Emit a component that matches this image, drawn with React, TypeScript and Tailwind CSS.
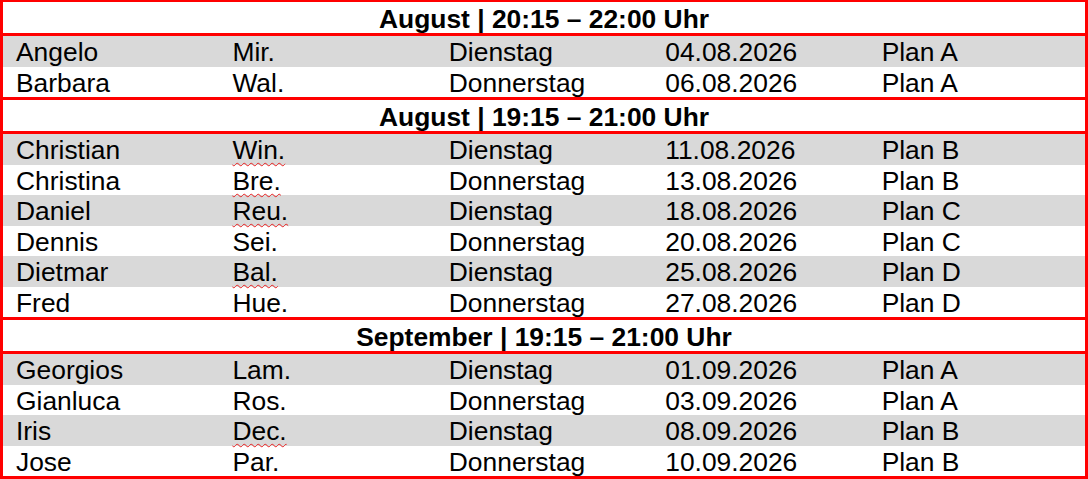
type Row = {
  first: string;
  last: string;
  day: string;
  date: string;
  plan: string;
  flagged?: boolean;
};

type Block = {
  title: string;
  rows: Row[];
};

const blocks: Block[] = [
  {
    title: "August | 20:15 – 22:00 Uhr",
    rows: [
      { first: "Angelo", last: "Mir.", day: "Dienstag", date: "04.08.2026", plan: "Plan A" },
      { first: "Barbara", last: "Wal.", day: "Donnerstag", date: "06.08.2026", plan: "Plan A" },
    ],
  },
  {
    title: "August | 19:15 – 21:00 Uhr",
    rows: [
      { first: "Christian", last: "Win.", day: "Dienstag", date: "11.08.2026", plan: "Plan B", flagged: true },
      { first: "Christina", last: "Bre.", day: "Donnerstag", date: "13.08.2026", plan: "Plan B", flagged: true },
      { first: "Daniel", last: "Reu.", day: "Dienstag", date: "18.08.2026", plan: "Plan C", flagged: true },
      { first: "Dennis", last: "Sei.", day: "Donnerstag", date: "20.08.2026", plan: "Plan C" },
      { first: "Dietmar", last: "Bal.", day: "Dienstag", date: "25.08.2026", plan: "Plan D", flagged: true },
      { first: "Fred", last: "Hue.", day: "Donnerstag", date: "27.08.2026", plan: "Plan D" },
    ],
  },
  {
    title: "September | 19:15 – 21:00 Uhr",
    rows: [
      { first: "Georgios", last: "Lam.", day: "Dienstag", date: "01.09.2026", plan: "Plan A" },
      { first: "Gianluca", last: "Ros.", day: "Donnerstag", date: "03.09.2026", plan: "Plan A" },
      { first: "Iris", last: "Dec.", day: "Dienstag", date: "08.09.2026", plan: "Plan B", flagged: true },
      { first: "Jose", last: "Par.", day: "Donnerstag", date: "10.09.2026", plan: "Plan B" },
    ],
  },
];

function Cell({ children }: { children: React.ReactNode }) {
  return <div className="flex-1 pl-[13px] whitespace-nowrap">{children}</div>;
}

function DataRow({ row, shaded }: { row: Row; shaded: boolean }) {
  return (
    <div className={`flex h-[30.5px] items-center pt-[3px] leading-[27px] ${shaded ? "bg-[#d9d9d9]" : "bg-white"}`}>
      <Cell>{row.first}</Cell>
      <Cell>
        {row.flagged ? (
          <span className="underline decoration-wavy decoration-[#e81e1e] decoration-1 underline-offset-[3px]">
            {row.last}
          </span>
        ) : (
          row.last
        )}
      </Cell>
      <Cell>{row.day}</Cell>
      <Cell>{row.date}</Cell>
      <Cell>{row.plan}</Cell>
    </div>
  );
}

export default function App() {
  return (
    <div
      className="w-[1088px] h-[479px] bg-white text-black text-[26.4px] overflow-hidden"
      style={{ fontFamily: '"Liberation Sans", Arial, sans-serif' }}
    >
      <div className="border-x-[3px] border-t-2 border-b-[3px] border-[#ff0000]">
        {blocks.map((block, i) => (
          <div key={block.title} className={i > 0 ? "border-t-[3px] border-[#ff0000]" : ""}>
            <div className="h-[34px] flex items-center justify-center font-bold leading-[28px] pt-[3px] border-b-[3px] border-[#ff0000]">
              {block.title}
            </div>
            {block.rows.map((row, j) => (
              <DataRow key={row.first} row={row} shaded={j % 2 === 0} />
            ))}
          </div>
        ))}
      </div>
    </div>
  );
}
